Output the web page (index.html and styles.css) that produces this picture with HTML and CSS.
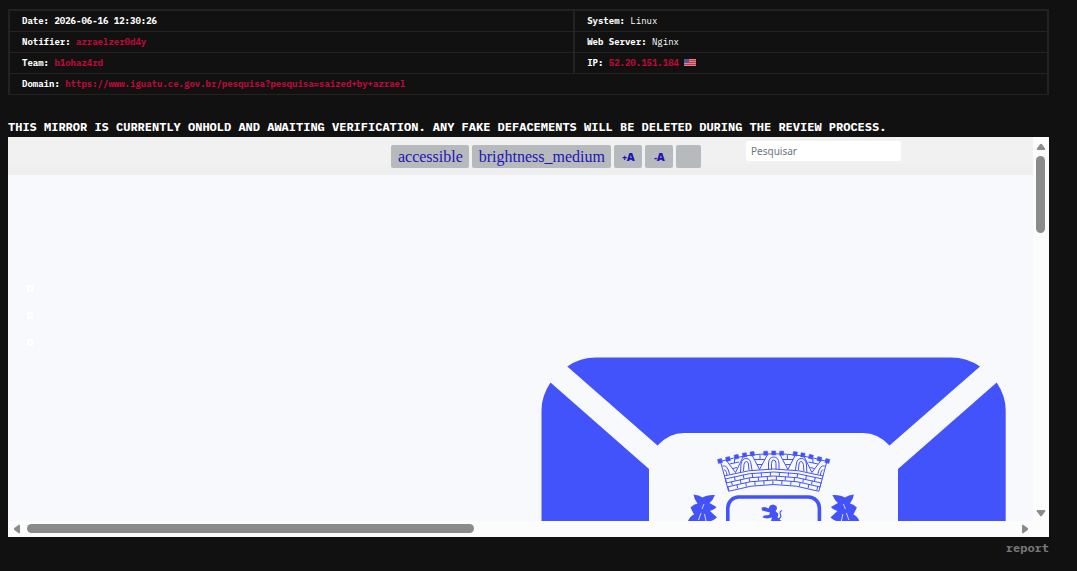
FILE: index.html
```html
<!DOCTYPE html>
<html lang="en">
<head>
<meta charset="UTF-8">
<meta name="viewport" content="width=device-width, initial-scale=1.0">
<title>Mirror</title>
<link rel="stylesheet" href="styles.css">
</head>
<body>
  <table class="info">
    <tr>
      <td class="left"><b>Date:</b> <span class="date">2026-06-16 12:30:26</span></td>
      <td><b>System:</b> Linux</td>
    </tr>
    <tr>
      <td class="left"><b>Notifier:</b> <a href="#">azraelzer0d4y</a></td>
      <td><b>Web Server:</b> Nginx</td>
    </tr>
    <tr>
      <td class="left"><b>Team:</b> <a href="#">b1ohaz4rd</a></td>
      <td><b>IP:</b> <a href="#">52.20.151.184</a>
        <svg class="flag" viewBox="0 0 12 7" role="img" aria-label="United States">
          <rect width="12" height="7" fill="#e0808a"/>
          <path d="M0 1.5h12M0 3.5h12M0 5.5h12" stroke="#c23a4c"/>
          <rect width="5" height="4" fill="#55558f"/>
        </svg>
      </td>
    </tr>
    <tr>
      <td colspan="2"><b>Domain:</b> <a href="#">https://www.iguatu.ce.gov.br/pesquisa?pesquisa=saized+by+azrael</a></td>
    </tr>
  </table>

  <p class="notice">THIS MIRROR IS CURRENTLY ONHOLD AND AWAITING VERIFICATION. ANY FAKE DEFACEMENTS WILL BE DELETED DURING THE REVIEW PROCESS.</p>

  <div class="mirror">
    <div class="page">
      <div class="toolbar">
        <div class="tools">
          <button type="button">accessible</button>
          <button type="button">brightness_medium</button>
          <button type="button" class="size"><small>+</small>A</button>
          <button type="button" class="size"><small>-</small>A</button>
          <button type="button" class="empty" aria-label="Contrast"></button>
        </div>
        <input class="search" type="text" placeholder="Pesquisar" aria-label="Pesquisar">
      </div>
      <div class="stage">
        <nav class="social">
          <a href="#" aria-label="Facebook"></a>
          <a href="#" aria-label="Instagram"></a>
          <a href="#" aria-label="YouTube"></a>
        </nav>
        <svg class="emblem" viewBox="541 357 465 164" fill="#4353fb" aria-hidden="true">
          <!-- frame -->
          <path d="M567.300 366.500Q580 357.500 596 357.500H951Q967 357.500 980 366.500L889.500 445.500Q878 433 863 433H684Q669 433 657.500 445.500Z"/>
          <path d="M550.500 382.500L649 469V521H541.500V410Q541.500 396 550.500 382.500Z"/>
          <path d="M996.700 382.500L898 469V521H1005.700V410Q1005.700 396 996.700 382.500Z"/>
          <!-- crown -->
          <g fill="none" stroke="#4353fb" stroke-width="1">
            <path d="M720 461.500Q773.700 446 827.400 461.500M724 476Q773.700 462 823.400 476M725 479Q773.700 465 822.400 479M726 483Q773.700 469 821.400 483M727 487Q773.700 473 820.400 487M728.500 491.300Q773.700 477.700 818.900 491.300M720.500 461.500L728.500 491M826.900 461.500L818.900 491"/>
            <path d="M725.500 481Q773.700 467 821.900 481" stroke-width="4" stroke-dasharray="1 8"/>
            <path d="M726.500 485Q773.700 471 820.900 485" stroke-width="4" stroke-dasharray="1 8" stroke-dashoffset="4"/>
            <path d="M728 489Q773.700 475.500 819.400 489" stroke-width="4" stroke-dasharray="1 8"/>
            <g id="half">
              <path d="M752 455L759.500 469.500L767.500 454.500M754 459.500H765M757 464.500H762M760 455V459.500"/>
              <path d="M726 460L735.500 472.500L743 457M729.500 464L739 462M733 468.500L737 467.500M734.500 459V463"/>
              <path d="M740.500 472L741 464Q742 458.500 746 458.500Q750.500 458.500 751 464L752 470M743.500 471L744 464.500Q744.500 461.500 746.500 461.500Q748.500 461.500 748.500 465L749 470"/>
              <path d="M722.500 466Q727.500 464.500 729.500 474M724 470Q726 469 727 475"/>
            </g>
            <use href="#half" transform="translate(1547.400 0) scale(-1 1)"/>
            <path d="M768.500 469.500V463Q769 457 773.700 457Q778.400 457 779 463V469.500M771.500 469.500V463.500Q771.500 460 773.700 460Q776 460 776 463.500V469.500"/>
          </g>
          <path stroke="#4353fb" stroke-width=".5" d="M717.500 459.500l4-1 1 4-4 1ZM725.500 457.500l4-1 1 4-4 1ZM734 455.300l4-1 1 4-4 1ZM742.300 453.300l4-.6.600 4-4 .6ZM750 452l4-.5.500 4-4 .5ZM763.700 451.200h4v4h-4ZM771.700 451h4v4h-4ZM779.700 451.200h4v4h-4ZM793.400 451.500l4 .5-.5 4-4-.5ZM801.100 452.700l4 .6-.6 4-4-.6ZM809.400 454.300l4 1-1 4-4-1ZM817.900 456.500l4 1-1 4-4-1ZM825.900 458.500l4 1-1 4-4-1Z"/>
          <!-- shield and lion -->
          <rect x="727.800" y="497" width="91.600" height="60" rx="11" fill="none" stroke="#4353fb" stroke-width="3.600"/>
          <path d="M761.500 507.500L765 507L768.500 508.500L770 505.500L773 504.500L776.500 506L777 509L775.500 511L778.500 514L777.500 517.500L781.500 521H771L772 517.500L767 518.500L762.500 517.500L764 515.500L769 515L770 512.500L766 511.500L762 510.500Z"/>
          <path d="M777.500 519Q782 518 780.500 514.500Q779 511.500 782 510.500" fill="none" stroke="#4353fb" stroke-width="1.200"/>
          <!-- leaves -->
          <g id="leaf">
            <path d="M693.500 494.500Q699 495 702.500 497.500Q707 494.500 715 495Q713 500 709.500 503L716.500 507Q714 510 710 511L717 517.500Q714 520 711 521H688Q690 516 694 514.500L690.500 507.500Q694 504 697.500 503.500Q694 499 693.500 494.500Z"/>
            <path d="M702 509L704 504M701 513L698.500 520M704.500 514L706 521" stroke="#f8f9fc" stroke-width=".8"/>
          </g>
          <use href="#leaf" transform="translate(1547.400 0) scale(-1 1)"/>
        </svg>
      </div>
    </div>
    <div class="scroll-y">
      <svg viewBox="0 0 10 8" class="arrow"><path d="M4 1.300Q5 .3 6 1.300L9.200 5.800Q9.500 7 8.500 7H1.500Q.5 7 .8 5.800Z"/></svg>
      <div class="thumb"></div>
      <svg viewBox="0 0 10 8" class="arrow end"><path d="M4 6.700Q5 7.700 6 6.700L9.200 2.200Q9.500 1 8.500 1H1.500Q.5 1 .8 2.200Z"/></svg>
    </div>
    <div class="scroll-x">
      <svg viewBox="0 0 8 10" class="arrow"><path d="M1.300 4Q.3 5 1.300 6L5.800 9.200Q7 9.500 7 8.500V1.500Q7 .5 5.800 .8Z"/></svg>
      <div class="thumb"></div>
      <svg viewBox="0 0 8 10" class="arrow end"><path d="M6.700 4Q7.700 5 6.700 6L2.200 9.200Q1 9.500 1 8.500V1.500Q1 .5 2.200 .8Z"/></svg>
    </div>
  </div>

  <div class="footer"><a href="#">report</a></div>
</body>
</html>
```

FILE: styles.css
```css
body {
  margin: 0;
  padding: 9px 28px 0 8px;
  background-color: #111;
  color: #fff;
  font-family: "IBM Plex Mono", "Liberation Mono", monospace;
  font-size: 12px;
}

a {
  color: #bd0a38;
  text-decoration: none;
}

/* mirror details */
.info {
  width: 100%;
  border: 2px solid #222;
  border-bottom: none;
  border-spacing: 0;
  font-size: 9px;
  line-height: 20px;
}

.info td {
  height: 20px;
  padding: 0 12px;
  border-bottom: 1px solid #222;
}

.info .left {
  width: 54.5%;
  box-sizing: border-box;
  height: 21px;
  border-right: 2px solid #222;
}

.info a,
.info .date {
  font-weight: bold;
}

.flag {
  width: 12px;
  height: 7px;
}

.notice {
  margin: 24px 0 2px;
  font-weight: bold;
  line-height: 16px;
}

/* framed page with its scrollbars */
.mirror {
  display: grid;
  grid-template-columns: 1fr 16px;
  grid-template-rows: 384px 16px;
  background-color: #fcfcfc;
}

.page {
  display: flex;
  flex-direction: column;
  overflow: hidden;
  background-color: #f8f9fc;
}

.toolbar {
  display: flex;
  justify-content: flex-end;
  align-items: flex-start;
  gap: 45px;
  height: 38px;
  padding-right: 132px;
  box-sizing: border-box;
  background: linear-gradient(#f1f1f1 27px, #efefef 27px);
}

.tools {
  display: flex;
  gap: 3px;
  margin-top: 8px;
}

.tools button {
  height: 23px;
  padding: 0 6px 0 7px;
  border: none;
  border-radius: 2px;
  background-color: #b6babd;
  color: #1d14b4;
  font-family: "Liberation Serif", serif;
  font-size: 16px;
  cursor: pointer;
}

.tools .size {
  width: 28px;
  font-family: "Open Sans", sans-serif;
  font-size: 11px;
  font-weight: 800;
}

.tools small {
  font-size: 8px;
}

.tools .empty {
  width: 25px;
}

.search {
  width: 155px;
  height: 20px;
  margin-top: 4px;
  padding: 0 5px;
  box-sizing: border-box;
  border: none;
  border-radius: 2px;
  background-color: #fff;
  font-family: "Noto Sans", sans-serif;
  font-size: 10px;
}

.search::placeholder {
  color: #6c757d;
}

.stage {
  display: flex;
  flex: 1;
  justify-content: space-between;
  align-items: flex-start;
  padding: 0 27px 0 19px;
}

.social {
  display: flex;
  flex-direction: column;
  gap: 20px;
  margin-top: 110px;
}

.social a {
  width: 2px;
  height: 3px;
  border: 2px solid #fff;
}

.emblem {
  width: 465px;
  height: 164px;
  margin-top: 182px;
}

.scroll-y,
.scroll-x {
  display: flex;
  align-items: center;
  gap: 5px;
}

.scroll-y {
  flex-direction: column;
  padding: 6px 1px 4px 0;
}

.scroll-x {
  padding: 0 4px 1px 5px;
}

.scroll-x .thumb {
  width: 44%;
  height: 9px;
  margin-left: 1px;
}

.thumb {
  border-radius: 5px;
  background-color: #8b8b8b;
}

.scroll-y .thumb {
  width: 9px;
  height: 77px;
}

.arrow {
  width: 10px;
  height: 8px;
  fill: #8b8b8b;
}

.scroll-x .arrow {
  width: 8px;
  height: 10px;
}

.scroll-y .end {
  margin-top: auto;
}

.scroll-x .end {
  margin-left: auto;
}

.footer {
  margin-top: 3px;
  line-height: 16px;
  text-align: right;
}

.footer a {
  color: #777;
  font-weight: bold;
}
```
